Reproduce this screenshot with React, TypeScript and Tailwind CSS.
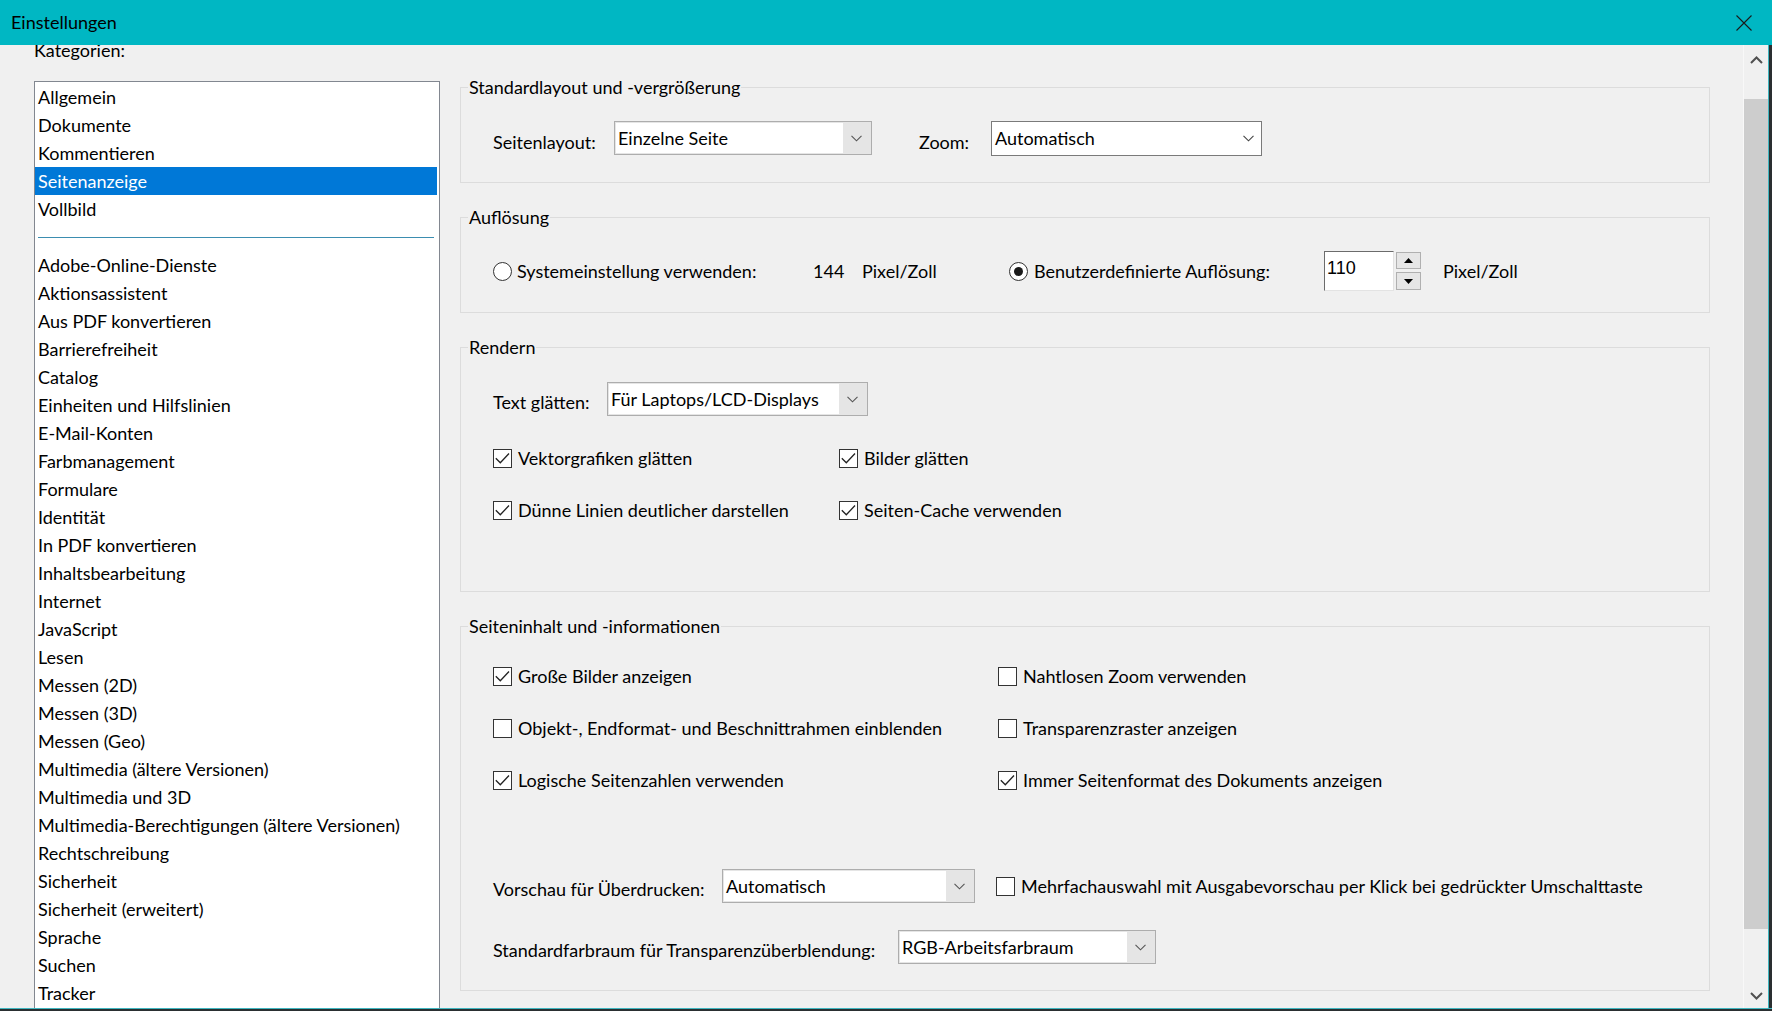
import React from "react";

const Chevron = ({ color = "#555" }: { color?: string }) => (
  <svg width="11" height="7" viewBox="0 0 11 7">
    <path d="M0.5 0.8 L5.5 5.8 L10.5 0.8" fill="none" stroke={color} strokeWidth="1.1" />
  </svg>
);

const Checkbox = ({ checked, label }: { checked: boolean; label: string }) => (
  <div className="flex items-center h-[28px]">
    <span className="w-[19px] h-[19px] border border-[#333333] bg-white flex items-center justify-center shrink-0">
      {checked && (
        <svg width="17" height="17" viewBox="0 0 17 17">
          <path d="M1.8 8.3 L6.3 12.8 L15 3.5" fill="none" stroke="#222222" strokeWidth="1.3" />
        </svg>
      )}
    </span>
    <span className="ml-[6px] whitespace-nowrap">{label}</span>
  </div>
);

const Radio = ({ checked }: { checked: boolean }) => (
  <span className="w-[19px] h-[19px] rounded-full border border-[#333333] bg-white flex items-center justify-center shrink-0">
    {checked && <span className="w-[9px] h-[9px] rounded-full bg-[#1a1a1a]" />}
  </span>
);

const GraySelect = ({ value, w }: { value: string; w: string }) => (
  <div className={`h-[34px] ${w} border border-[#adadad] bg-[#e5e5e5] flex p-[1px] shrink-0`}>
    <div className="flex-1 bg-white flex items-center pl-[2px] whitespace-nowrap">{value}</div>
    <div className="w-[27px] flex items-center justify-center">
      <Chevron />
    </div>
  </div>
);

const Group = ({
  title,
  h,
  pt,
  children,
}: {
  title: string;
  h: string;
  pt: string;
  children: React.ReactNode;
}) => (
  <div className={`relative border border-[#dcdcdc] ${h} ${pt} pl-[32px] shrink-0`}>
    <span className="absolute left-[7px] -top-[15px] h-[28px] leading-[28px] px-[1px] bg-[#f0f0f0] whitespace-nowrap">
      {title}
    </span>
    {children}
  </div>
);

const top = ["Allgemein", "Dokumente", "Kommentieren", "Seitenanzeige", "Vollbild"];
const rest = [
  "Adobe-Online-Dienste",
  "Aktionsassistent",
  "Aus PDF konvertieren",
  "Barrierefreiheit",
  "Catalog",
  "Einheiten und Hilfslinien",
  "E-Mail-Konten",
  "Farbmanagement",
  "Formulare",
  "Identität",
  "In PDF konvertieren",
  "Inhaltsbearbeitung",
  "Internet",
  "JavaScript",
  "Lesen",
  "Messen (2D)",
  "Messen (3D)",
  "Messen (Geo)",
  "Multimedia (ältere Versionen)",
  "Multimedia und 3D",
  "Multimedia-Berechtigungen (ältere Versionen)",
  "Rechtschreibung",
  "Sicherheit",
  "Sicherheit (erweitert)",
  "Sprache",
  "Suchen",
  "Tracker",
];

export default function App() {
  return (
    <div className="w-[1772px] h-[1011px] bg-[#f0f0f0] overflow-hidden flex flex-col text-[18px] text-black [font-family:'Segoe_UI',Lato,sans-serif]">
      {/* Title bar */}
      <div className="relative z-10 h-[45px] bg-[#00b7c3] flex items-center pl-[11px] pr-[20px] shrink-0">
        <span className="flex-1">Einstellungen</span>
        <svg width="16" height="16" viewBox="0 0 16 16">
          <path d="M0.5 0.5 L15.5 15.5 M15.5 0.5 L0.5 15.5" stroke="#1a1a1a" strokeWidth="1.1" />
        </svg>
      </div>

      {/* Body */}
      <div className="flex h-[963px] shrink-0">
        {/* Left column */}
        <div className="w-[440px] pl-[34px] flex flex-col overflow-hidden shrink-0">
          <div className="-mt-[9px] h-[28px] leading-[28px]">Kategorien:</div>
          <div className="mt-[17px] flex-1 border border-b-0 border-[#828790] bg-white pt-[1px]">
            {top.map((t) => (
              <div
                key={t}
                className={
                  t === "Seitenanzeige"
                    ? "h-[28px] leading-[28px] pl-[3px] mr-[2px] bg-[#0078d7] text-white whitespace-nowrap"
                    : "h-[28px] leading-[28px] pl-[3px] whitespace-nowrap"
                }
              >
                {t}
              </div>
            ))}
            <div className="h-[28px] flex items-center pl-[3px] pr-[5px]">
              <div className="h-[1px] w-full bg-[#3b8db0]" />
            </div>
            {rest.map((t) => (
              <div key={t} className="h-[28px] leading-[28px] pl-[3px] whitespace-nowrap">
                {t}
              </div>
            ))}
          </div>
        </div>

        {/* Right content */}
        <div className="ml-[20px] w-[1250px] pt-[42px] flex flex-col shrink-0">
          <Group title="Standardlayout und -vergrößerung" h="h-[96px]" pt="pt-[33px]">
            <div className="flex items-center h-[34px]">
              <span className="w-[121px] pt-[8px] whitespace-nowrap">Seitenlayout:</span>
              <GraySelect value="Einzelne Seite" w="w-[258px]" />
              <span className="ml-[47px] w-[72px] pt-[8px]">Zoom:</span>
              <div className="h-[35px] w-[271px] border border-[#7a7a7a] bg-white flex items-center">
                <span className="flex-1 pl-[3px]">Automatisch</span>
                <span className="w-[26px] flex justify-center">
                  <Chevron color="#444" />
                </span>
              </div>
            </div>
          </Group>

          <div className="mt-[34px]">
            <Group title="Auflösung" h="h-[96px]" pt="pt-[33px]">
              <div className="flex items-center h-[40px]">
                <div className="w-[320px] flex items-center">
                  <Radio checked={false} />
                  <span className="ml-[5px] whitespace-nowrap">Systemeinstellung verwenden:</span>
                </div>
                <span className="w-[49px]">144</span>
                <span className="w-[147px] whitespace-nowrap">Pixel/Zoll</span>
                <div className="w-[315px] flex items-center">
                  <Radio checked={true} />
                  <span className="ml-[6px] whitespace-nowrap">Benutzerdefinierte Auflösung:</span>
                </div>
                <div className="h-[40px] w-[70px] bg-white border border-t-[#6b6b6b] border-l-[#6b6b6b] border-r-[#e3e3e3] border-b-[#e3e3e3] pl-[2px] leading-[32px] [font-family:'Segoe_UI','Liberation_Sans',sans-serif]">
                  110
                </div>
                <div className="ml-[2px] h-[40px] w-[25px] flex flex-col justify-between py-[1px]">
                  <div className="h-[17px] bg-[#e6e6e6] border border-[#b0b0b0] flex items-center justify-center">
                    <svg width="9" height="5" viewBox="0 0 9 5">
                      <path d="M0 5 L4.5 0 L9 5 Z" fill="#000" />
                    </svg>
                  </div>
                  <div className="h-[18px] bg-[#e6e6e6] border border-[#b0b0b0] flex items-center justify-center">
                    <svg width="9" height="5" viewBox="0 0 9 5">
                      <path d="M0 0 L4.5 5 L9 0 Z" fill="#000" />
                    </svg>
                  </div>
                </div>
                <span className="ml-[22px] whitespace-nowrap">Pixel/Zoll</span>
              </div>
            </Group>
          </div>

          <div className="mt-[34px]">
            <Group title="Rendern" h="h-[245px]" pt="pt-[34px]">
              <div className="flex items-center h-[34px]">
                <span className="w-[114px] pt-[6px] whitespace-nowrap">Text glätten:</span>
                <GraySelect value="Für Laptops/LCD-Displays" w="w-[261px]" />
              </div>
              <div className="mt-[28px] flex">
                <div className="w-[346px]">
                  <Checkbox checked label="Vektorgrafiken glätten" />
                </div>
                <Checkbox checked label="Bilder glätten" />
              </div>
              <div className="mt-[24px] flex">
                <div className="w-[346px]">
                  <Checkbox checked label="Dünne Linien deutlicher darstellen" />
                </div>
                <Checkbox checked label="Seiten-Cache verwenden" />
              </div>
            </Group>
          </div>

          <div className="mt-[34px]">
            <Group title="Seiteninhalt und -informationen" h="h-[365px]" pt="pt-[35px]">
              <div className="flex">
                <div className="w-[505px]">
                  <Checkbox checked label="Große Bilder anzeigen" />
                </div>
                <Checkbox checked={false} label="Nahtlosen Zoom verwenden" />
              </div>
              <div className="mt-[24px] flex">
                <div className="w-[505px]">
                  <Checkbox checked={false} label="Objekt-, Endformat- und Beschnittrahmen einblenden" />
                </div>
                <Checkbox checked={false} label="Transparenzraster anzeigen" />
              </div>
              <div className="mt-[24px] flex">
                <div className="w-[505px]">
                  <Checkbox checked label="Logische Seitenzahlen verwenden" />
                </div>
                <Checkbox checked label="Immer Seitenformat des Dokuments anzeigen" />
              </div>
              <div className="mt-[75px] flex items-center h-[34px]">
                <span className="w-[229px] pt-[6px] whitespace-nowrap">Vorschau für Überdrucken:</span>
                <GraySelect value="Automatisch" w="w-[253px]" />
                <div className="ml-[21px]">
                  <Checkbox
                    checked={false}
                    label="Mehrfachauswahl mit Ausgabevorschau per Klick bei gedrückter Umschalttaste"
                  />
                </div>
              </div>
              <div className="mt-[27px] flex items-center h-[34px]">
                <span className="w-[405px] pt-[6px] whitespace-nowrap">
                  Standardfarbraum für Transparenzüberblendung:
                </span>
                <GraySelect value="RGB-Arbeitsfarbraum" w="w-[258px]" />
              </div>
            </Group>
          </div>
        </div>

        <div className="flex-1" />

        {/* Scrollbar */}
        <div className="w-[25px] border-l border-[#f8f8f8] flex flex-col shrink-0">
          <div className="h-[54px] flex justify-center pt-[11px]">
            <svg width="13" height="8" viewBox="0 0 13 8">
              <path d="M1 7 L6.5 1.5 L12 7" fill="none" stroke="#505050" strokeWidth="2" />
            </svg>
          </div>
          <div className="h-[830px] bg-[#cdcdcd]" />
          <div className="flex-1 flex items-end justify-center pb-[8px]">
            <svg width="13" height="8" viewBox="0 0 13 8">
              <path d="M1 1 L6.5 6.5 L12 1" fill="none" stroke="#505050" strokeWidth="2" />
            </svg>
          </div>
        </div>
        <div className="w-[4px] border-l border-[#3fb6c0] bg-[#2a2f31] shrink-0" />
      </div>
      <div className="flex-1 border-t border-[#3fb6c0] bg-[#2a2f31]" />
    </div>
  );
}
